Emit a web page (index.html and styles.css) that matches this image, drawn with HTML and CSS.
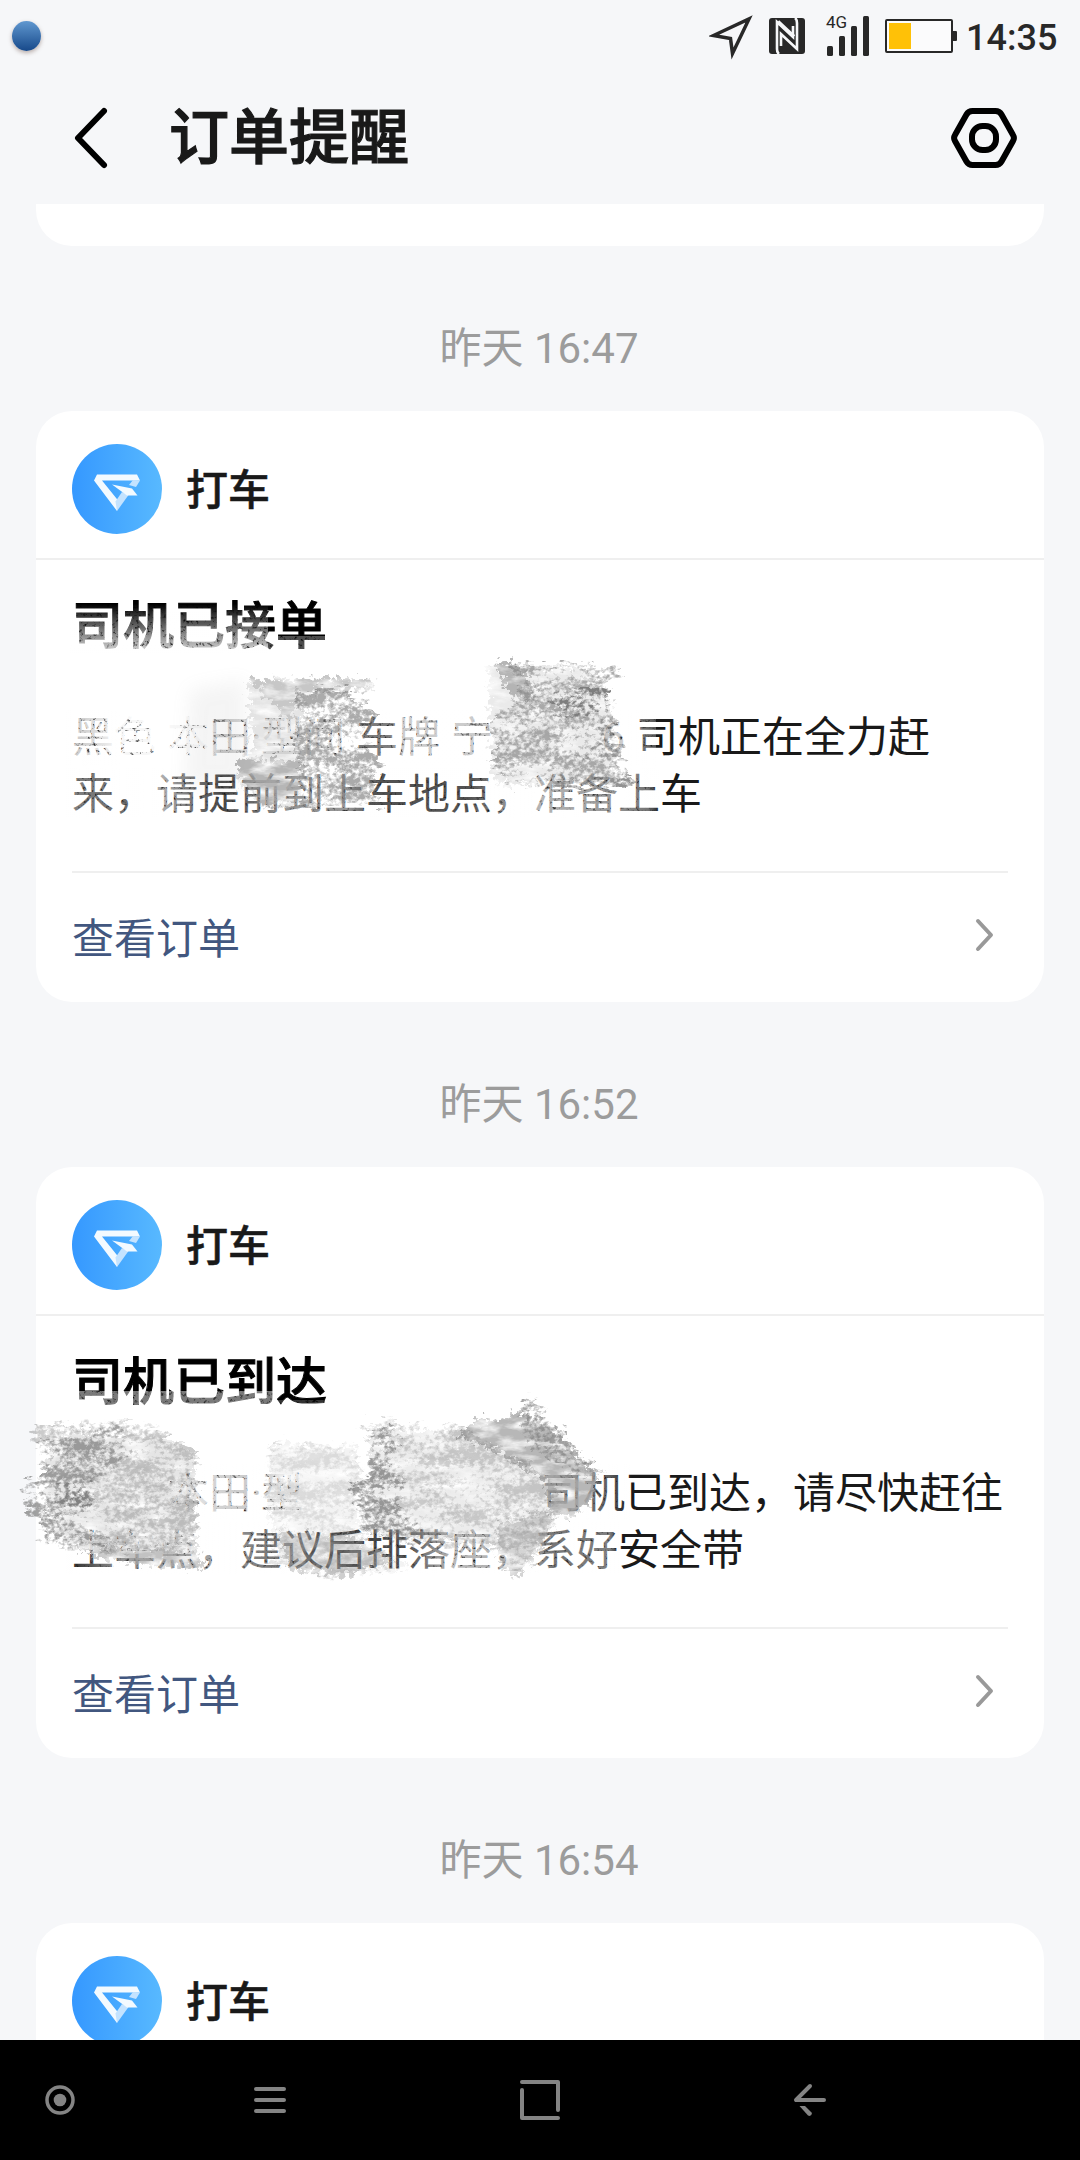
FILE: index.html
```html
<!DOCTYPE html>
<html lang="zh-CN">
<head>
<meta charset="utf-8">
<title>订单提醒</title>
<link rel="stylesheet" href="styles.css">
</head>
<body>
<svg class="defs" width="0" height="0" aria-hidden="true">
  <defs>
    <linearGradient id="logo-bg"><stop offset="0" stop-color="#3598ff"/><stop offset="1" stop-color="#58b9ff"/></linearGradient>
    <symbol id="logo" viewBox="0 0 90 90">
      <circle cx="45" cy="45" r="45" fill="url(#logo-bg)"/>
      <path d="M25 30.5H65L68 36.5H30L46.500 57L45 67L22 36.500Z" fill="#f3faff"/>
      <path d="M61 36L68 36.500L64 43L57 41Z" fill="#c4e3ff"/>
      <path d="M45 67L56.500 51L50 48L43.500 57.500Z" fill="#c4e3ff"/>
      <path d="M40 40.500L60 44.500L65.500 51.500L55 51.500Z" fill="#f3faff"/>
    </symbol>
    <symbol id="chevron" viewBox="0 0 20 34">
      <path d="M3 3L16 17L3 31" fill="none" stroke="#999" stroke-width="4" stroke-linecap="round" stroke-linejoin="round"/>
    </symbol>
    <filter id="chalk" x="-10%" y="-10%" width="120%" height="120%" color-interpolation-filters="sRGB">
      <feTurbulence type="fractalNoise" baseFrequency=".05 .16" numOctaves="3" seed="4" result="edge"/>
      <feDisplacementMap in="SourceGraphic" in2="edge" scale="26" xChannelSelector="R" yChannelSelector="G" result="rough"/>
      <feTurbulence type="fractalNoise" baseFrequency=".2 .26" numOctaves="4" seed="9" result="fine"/>
      <feColorMatrix in="fine" values="0 0 0 0 0  0 0 0 0 0  0 0 0 0 0  1 0 0 0 0" result="fine-a"/>
      <feTurbulence type="fractalNoise" baseFrequency=".018 .06" numOctaves="4" seed="21" result="streak"/>
      <feColorMatrix in="streak" values="0 0 0 0 0  0 0 0 0 0  0 0 0 0 0  1 0 0 0 0" result="streak-a"/>
      <feComposite in="fine-a" in2="streak-a" operator="arithmetic" k2=".5" k3=".5" result="grain"/>
      <feColorMatrix in="grain" values="0 0 0 0 0  0 0 0 0 0  0 0 0 0 0  0 0 0 5.500 -2.350" result="holes"/>
      <feComposite in="rough" in2="holes" operator="in"/>
    </filter>
    <filter id="dust" x="-10%" y="-10%" width="120%" height="120%" color-interpolation-filters="sRGB">
      <feTurbulence type="fractalNoise" baseFrequency=".2" numOctaves="3" seed="2" result="edge"/>
      <feDisplacementMap in="SourceGraphic" in2="edge" scale="22" xChannelSelector="R" yChannelSelector="G" result="rough"/>
      <feTurbulence type="fractalNoise" baseFrequency=".04 .1" numOctaves="4" seed="5" result="grain"/>
      <feColorMatrix in="grain" values="0 0 0 0 0  0 0 0 0 0  0 0 0 0 0  2.200 0 0 0 -.3" result="holes"/>
      <feComposite in="rough" in2="holes" operator="in"/>
    </filter>
    <filter id="rub" x="-5%" y="-10%" width="110%" height="120%" color-interpolation-filters="sRGB">
      <feTurbulence type="fractalNoise" baseFrequency=".3" numOctaves="3" seed="7" result="grain"/>
      <feColorMatrix in="grain" values="0 0 0 0 0  0 0 0 0 0  0 0 0 0 0  3 0 0 0 -.350" result="holes"/>
      <feComposite in="SourceGraphic" in2="holes" operator="in"/>
    </filter>
    <filter id="soft" x="-50%" y="-50%" width="200%" height="200%"><feGaussianBlur stdDeviation="9"/></filter>
    <linearGradient id="fade-title" x1="0" x2="0" y1="0" y2="1">
      <stop offset="0" stop-color="#fff" stop-opacity="0"/><stop offset=".45" stop-color="#fff" stop-opacity=".4"/><stop offset="1" stop-color="#fff" stop-opacity=".88"/>
    </linearGradient>
    <linearGradient id="fade-a1" gradientUnits="userSpaceOnUse" x1="72" x2="672" y1="0" y2="0">
      <stop offset="0" stop-color="#fff" stop-opacity=".76"/><stop offset=".05" stop-color="#fff" stop-opacity=".88"/>
      <stop offset=".08" stop-color="#fff" stop-opacity=".97"/><stop offset=".22" stop-color="#fff" stop-opacity=".97"/>
      <stop offset=".25" stop-color="#fff" stop-opacity=".75"/><stop offset=".31" stop-color="#fff" stop-opacity=".9"/>
      <stop offset=".46" stop-color="#fff" stop-opacity=".85"/><stop offset=".48" stop-color="#fff" stop-opacity=".42"/>
      <stop offset=".53" stop-color="#fff" stop-opacity=".45"/><stop offset=".55" stop-color="#fff" stop-opacity=".78"/>
      <stop offset=".92" stop-color="#fff" stop-opacity=".78"/><stop offset=".95" stop-color="#fff" stop-opacity=".4"/>
      <stop offset="1" stop-color="#fff" stop-opacity=".1"/>
    </linearGradient>
    <linearGradient id="fade-a2" gradientUnits="userSpaceOnUse" x1="72" x2="672" y1="0" y2="0">
      <stop offset="0" stop-color="#fff" stop-opacity=".45"/><stop offset=".1" stop-color="#fff" stop-opacity=".35"/>
      <stop offset=".15" stop-color="#fff" stop-opacity=".65"/><stop offset=".2" stop-color="#fff" stop-opacity=".4"/>
      <stop offset=".25" stop-color="#fff" stop-opacity=".2"/><stop offset=".35" stop-color="#fff" stop-opacity=".5"/>
      <stop offset=".46" stop-color="#fff" stop-opacity=".55"/><stop offset=".5" stop-color="#fff" stop-opacity=".25"/>
      <stop offset=".66" stop-color="#fff" stop-opacity=".25"/><stop offset=".72" stop-color="#fff" stop-opacity=".5"/>
      <stop offset=".78" stop-color="#fff" stop-opacity=".68"/><stop offset=".9" stop-color="#fff" stop-opacity=".55"/>
      <stop offset=".96" stop-color="#fff" stop-opacity=".4"/><stop offset=".98" stop-color="#fff" stop-opacity="0"/>
    </linearGradient>
    <linearGradient id="fade-b1" gradientUnits="userSpaceOnUse" x1="72" x2="632" y1="0" y2="0">
      <stop offset="0" stop-color="#fff" stop-opacity="1"/><stop offset=".19" stop-color="#fff" stop-opacity=".97"/>
      <stop offset=".25" stop-color="#fff" stop-opacity=".82"/><stop offset=".34" stop-color="#fff" stop-opacity=".76"/>
      <stop offset=".37" stop-color="#fff" stop-opacity=".94"/><stop offset=".82" stop-color="#fff" stop-opacity=".8"/>
      <stop offset=".86" stop-color="#fff" stop-opacity=".5"/><stop offset=".96" stop-color="#fff" stop-opacity=".3"/>
      <stop offset="1" stop-color="#fff" stop-opacity="0"/>
    </linearGradient>
    <linearGradient id="fade-b2" gradientUnits="userSpaceOnUse" x1="72" x2="632" y1="0" y2="0">
      <stop offset="0" stop-color="#fff" stop-opacity=".1"/><stop offset=".07" stop-color="#fff" stop-opacity=".45"/>
      <stop offset=".25" stop-color="#fff" stop-opacity=".6"/><stop offset=".36" stop-color="#fff" stop-opacity=".4"/>
      <stop offset=".48" stop-color="#fff" stop-opacity=".15"/><stop offset=".6" stop-color="#fff" stop-opacity=".25"/>
      <stop offset=".68" stop-color="#fff" stop-opacity=".7"/><stop offset=".8" stop-color="#fff" stop-opacity=".65"/>
      <stop offset=".86" stop-color="#fff" stop-opacity=".4"/><stop offset=".96" stop-color="#fff" stop-opacity=".45"/>
      <stop offset=".98" stop-color="#fff" stop-opacity="0"/>
    </linearGradient>
  </defs>
</svg>

<div class="phone">
  <div class="statusbar">
    <span class="ball"></span>
    <div class="status-icons">
      <svg class="i-nav" viewBox="0 0 48 48"><path d="M4.500 20.500L40 4L23.500 38.500L21.500 23.500Z" fill="none" stroke="#282828" stroke-width="3.500"/></svg>
      <svg class="i-nfc" viewBox="0 0 36 36"><rect width="36" height="36" rx="3" fill="#282828"/><path d="M10 36C8.500 35 8 33.500 8 31V4L24 19V8M26 0C27.500 1 28 2.500 28 5V31L12 16V28" fill="none" stroke="#f6f7f9" stroke-width="2.600"/><path d="M9 3.500L25 18.500" stroke="#f6f7f9" stroke-width="3.500"/></svg>
      <div class="signal">
        <span class="gen">4G</span>
        <svg viewBox="0 0 42 40"><g fill="#282828"><rect y="30" width="6" height="10" rx="1.500"/><rect x="12" y="20" width="6" height="20" rx="1.500"/><rect x="24" y="10" width="6" height="30" rx="1.500"/><rect x="36" width="6" height="40" rx="1.500"/></g></svg>
      </div>
      <svg class="i-bat" viewBox="0 0 72 34"><rect x="1" y="1" width="66" height="32" rx="1" fill="#fbfbfc" stroke="#282828" stroke-width="2"/><rect x="4" y="4" width="22" height="26" fill="#ffc107"/><rect x="67" y="12" width="5" height="10" rx="1" fill="#282828"/></svg>
      <span class="clock">14:35</span>
    </div>
  </div>

  <header class="appbar">
    <svg class="back" viewBox="0 0 36 66"><path d="M31 6L5 33L31 60" fill="none" stroke="#000" stroke-width="6" stroke-linecap="round" stroke-linejoin="round"/></svg>
    <h1>订单提醒</h1>
    <svg class="settings" viewBox="0 0 66 60"><path d="M21.500 3H44.500Q48.500 3 50.500 6.500L62 27Q63.800 30 62 33L50.500 53.500Q48.500 57 44.500 57H21.500Q17.500 57 15.500 53.500L4 33Q2.200 30 4 27L15.500 6.500Q17.500 3 21.500 3Z" fill="none" stroke="#000" stroke-width="6"/><rect x="21" y="18" width="24" height="24" rx="10.500" fill="none" stroke="#000" stroke-width="6"/></svg>
  </header>

  <main class="feed">
    <div class="card-tail"></div>

    <div class="time">昨天 16:47</div>
    <article class="card">
      <div class="card-head"><svg class="logo"><use href="#logo"/></svg><span>打车</span></div>
      <div class="card-body">
        <h2>司机已接单</h2>
        <p>黑色<i class="sp"></i>本田<i class="dot">·</i>型间<i class="sp"></i>车牌<i class="sp"></i>宁<i class="plate">6</i><i class="sp"></i>司机正在全力赶<br>来，请提前到上车地点，准备上车</p>
      </div>
      <div class="card-foot"><span>查看订单</span><svg class="chev"><use href="#chevron"/></svg></div>
      <svg class="smudge" viewBox="36 411 1008 591">
        <g filter="url(#rub)">
          <rect x="70" y="604" width="198" height="50" fill="url(#fade-title)"/>
          <rect x="268" y="636" width="62" height="18" fill="#fff" opacity=".3"/>
          <rect x="66" y="710" width="590" height="56" fill="url(#fade-a1)"/>
          <rect x="66" y="768" width="600" height="50" fill="url(#fade-a2)"/>
        </g>
        <path d="M190 690L245 680L245 785L185 785Z" fill="#999" opacity=".1" filter="url(#soft)"/>
        <g filter="url(#dust)" fill="#aaa">
          <path d="M247 680L372 678L374 690L305 694L300 750L306 775L302 805L262 808L240 785L238 760L252 752Z" opacity=".3"/>
          <path d="M248 679L368 678L372 688L300 692L290 722L270 700Z" opacity=".5"/>
          <path d="M236 758L304 762L298 800L265 806L238 775Z" opacity=".8"/>
          <path d="M494 663L520 664L535 690L530 702L512 698Z" opacity=".85"/>
          <path d="M488 665L590 668L610 700L615 780L508 785L494 784L490 720Z" opacity=".25"/>
        </g>
        <g filter="url(#chalk)" fill="#777">
          <path d="M296 690L345 688L375 715L368 730L380 770L374 790L384 808L305 808L300 765L294 750Z" opacity=".62"/>
          <path d="M515 664L590 662L592 670L624 668L600 688L616 696L612 742L624 748L622 770L634 780L622 790L505 786L492 760L495 715L520 700Z" opacity=".6"/>
          <path d="M548 690L610 690L614 712L560 714Z" opacity=".85"/>
          <path d="M575 720L612 724L615 760L575 755Z" opacity=".4"/>
          <path d="M555 780L630 776L625 788L560 789Z" opacity=".5"/>
        </g>
      </svg>
    </article>

    <div class="time">昨天 16:52</div>
    <article class="card">
      <div class="card-head"><svg class="logo"><use href="#logo"/></svg><span>打车</span></div>
      <div class="card-body">
        <h2>司机已到达</h2>
        <p><i class="gap"></i>本田<i class="dot">·</i>型<i class="lost"></i>司机已到达，请尽快赶往<br>上车点，建议后排落座，系好安全带</p>
      </div>
      <div class="card-foot"><span>查看订单</span><svg class="chev"><use href="#chevron"/></svg></div>
      <svg class="smudge" viewBox="36 1167 1008 591">
        <g filter="url(#rub)">
          <rect x="70" y="1391" width="205" height="20" fill="#fff" opacity=".48"/>
          <rect x="275" y="1400" width="60" height="10" fill="#fff" opacity=".2"/>
          <rect x="66" y="1464" width="566" height="56" fill="url(#fade-b1)"/>
          <rect x="66" y="1522" width="566" height="52" fill="url(#fade-b2)"/>
          <rect x="66" y="1522" width="132" height="32" fill="#fff" opacity=".85"/>
        </g>
        <g filter="url(#dust)" fill="#aaa">
          <path d="M50 1432L160 1435L195 1455L195 1565L140 1560L55 1540L45 1500Z" opacity=".3"/>
          <path d="M70 1547L200 1550L202 1568L150 1565L100 1558Z" opacity=".6"/>
          <path d="M270 1443L355 1448L360 1535L410 1568L330 1578L278 1565L268 1500Z" opacity=".14"/>
          <path d="M278 1532L350 1535L395 1560L350 1576L290 1570Z" opacity=".5"/>
          <path d="M370 1430L460 1430L540 1470L560 1510L540 1550L490 1545L370 1535Z" opacity=".22"/>
          <path d="M458 1437L476 1418L500 1420L520 1412L560 1435L597 1475L592 1500L570 1518L550 1515L545 1482L500 1452Z" opacity=".85"/>
          <path d="M495 1525L555 1510L540 1550L515 1578L502 1565Z" opacity=".5"/>
        </g>
        <g filter="url(#chalk)" fill="#777">
          <path d="M32 1426L130 1420L160 1428L162 1436L198 1452L192 1500L198 1530L190 1552L110 1550L40 1545L42 1518L28 1512L24 1486L42 1482L40 1440Z" opacity=".38"/>
          <path d="M38 1440L120 1425L135 1440L118 1460L95 1482L90 1520L115 1545L42 1543L42 1518L26 1508L26 1486L42 1480Z" opacity=".5"/>
          <path d="M50 1485L88 1485L92 1506L58 1510Z" opacity=".7"/>
          <path d="M270 1443L355 1448L362 1480L350 1530L400 1565L310 1576L275 1562L268 1500Z" opacity=".2"/>
          <path d="M364 1424L455 1425L500 1450L555 1480L560 1510L530 1570L500 1565L490 1545L425 1542L362 1535L360 1510L350 1500L350 1482L370 1480L368 1440Z" opacity=".34"/>
          <path d="M368 1430L400 1430L388 1470L405 1480L398 1510L420 1530L410 1545L364 1535L362 1510L352 1500L352 1482L372 1480Z" opacity=".6"/>
          <path d="M524 1396L534 1398L560 1430L600 1476L580 1478L520 1440Z" opacity=".65"/>
        </g>
      </svg>
    </article>

    <div class="time">昨天 16:54</div>
    <article class="card">
      <div class="card-head"><svg class="logo"><use href="#logo"/></svg><span>打车</span></div>
    </article>
  </main>

  <nav class="navbar">
    <svg viewBox="0 0 40 44"><circle cx="20" cy="22" r="13" fill="none" stroke="#848484" stroke-width="3.500"/><circle cx="20" cy="22" r="6.300" fill="#848484"/></svg>
    <svg viewBox="0 0 40 44"><path d="M6 11H34M6 22H34M6 33H34" stroke="#848484" stroke-width="4" stroke-linecap="round"/></svg>
    <svg viewBox="0 0 40 44"><path d="M2 4H38V32M2 12V40H38" fill="none" stroke="#848484" stroke-width="4" stroke-linecap="round" stroke-linejoin="round"/></svg>
    <svg viewBox="0 0 40 44"><path d="M20 8L6 22H34" fill="none" stroke="#848484" stroke-width="4" stroke-linecap="round" stroke-linejoin="round"/><path d="M9.500 28H15L22 35Q21.500 39 18 37.500Z" fill="#848484"/></svg>
  </nav>
</div>
</body>
</html>
```
FILE: styles.css
```css
* { box-sizing: border-box; }
body {
  margin: 0;
  font-family: Roboto, "Noto Sans CJK SC", sans-serif;
  color: #191919;
}
svg { display: block; }
i { font-style: normal; }
.defs { position: absolute; }
.phone {
  width: 1080px;
  height: 2160px;
  display: flex;
  flex-direction: column;
  overflow: hidden;
  background: #f6f7f9;
}

.statusbar {
  height: 72px;
  flex: none;
  display: flex;
  align-items: center;
  justify-content: space-between;
  padding: 0 23px 0 12px;
}
.ball {
  width: 29px;
  height: 30px;
  border-radius: 50%;
  background: linear-gradient(#6098d0, #17498a);
  box-shadow: 0 2px 4px rgba(90, 60, 50, .4);
}
.status-icons { display: flex; align-items: center; }
.i-nav { width: 48px; height: 48px; margin-top: 6px; }
.i-nfc { width: 36px; height: 36px; margin-left: 12px; }
.signal { position: relative; width: 42px; height: 40px; margin-left: 22px; }
.signal svg { width: 42px; height: 40px; }
.gen {
  position: absolute;
  left: -1px;
  top: -3px;
  font-size: 17px;
  line-height: 18px;
  color: #282828;
}
.i-bat { width: 72px; height: 34px; margin-left: 16px; }
.clock {
  width: 91px;
  margin-left: 9px;
  padding-top: 4px;
  font-size: 36px;
  font-weight: 500;
  line-height: 44px;
  white-space: nowrap;
  color: #282828;
}

.appbar {
  height: 132px;
  flex: none;
  display: flex;
  align-items: center;
  padding: 0 63px 0 73px;
}
.back { width: 36px; height: 66px; }
.appbar h1 {
  flex: 1;
  margin: 0 0 0 60px;
  padding-top: 2px;
  font-size: 60px;
  line-height: 72px;
  font-weight: 500;
  -webkit-text-stroke: 1.2px;
}
.settings { width: 66px; height: 60px; }

.feed {
  flex: 1;
  min-height: 0;
  overflow: hidden;
  padding: 0 36px;
}
.card-tail { height: 42px; background: #fff; border-radius: 0 0 36px 36px; }
.time {
  height: 165px;
  padding: 39px 2px 0 0;
  font-size: 42px;
  line-height: 127px;
  text-align: center;
  color: #9c9c9c;
}
.card {
  position: relative;
  height: 591px;
  background: #fff;
  border-radius: 36px;
}
.card-head {
  height: 149px;
  display: flex;
  align-items: center;
  gap: 24px;
  padding: 8px 36px 0;
  border-bottom: 2px solid #efefef;
  font-size: 42px;
  font-weight: 500;
}
.card-head span { padding-bottom: 5px; -webkit-text-stroke: .5px; }
.logo { width: 90px; height: 90px; }
.card-body {
  height: 313px;
  margin: 0 36px;
  padding-top: 32px;
  border-bottom: 2px solid #efefef;
}
.card-body h2 {
  margin: 0;
  font-size: 51px;
  line-height: 70px;
  font-weight: 500;
  -webkit-text-stroke: 1px;
  color: #000;
}
.card-body p {
  margin: 47px -20px 0 0;
  font-size: 42px;
  line-height: 57px;
  white-space: nowrap;
}
.card-body i { display: inline-block; }
.sp { width: 11px; }
.dot { width: 10px; text-align: center; }
.plate { width: 132px; text-align: right; }
.gap { width: 95px; }
.lost { width: 238px; }
.card-foot {
  height: 124px;
  display: flex;
  align-items: center;
  justify-content: space-between;
  padding: 0 49px 0 36px;
  font-size: 42px;
  color: #42577f;
}
.chev { width: 20px; height: 34px; }
.smudge {
  position: absolute;
  inset: 0;
  width: 1008px;
  height: 591px;
  overflow: visible;
}

.navbar {
  height: 120px;
  flex: none;
  display: flex;
  align-items: center;
  padding-left: 40px;
  background: #000;
}
.navbar svg { width: 40px; height: 44px; }
.navbar svg + svg { margin-left: 170px; }
.navbar svg:nth-child(n + 3) { margin-left: 230px; }
```
